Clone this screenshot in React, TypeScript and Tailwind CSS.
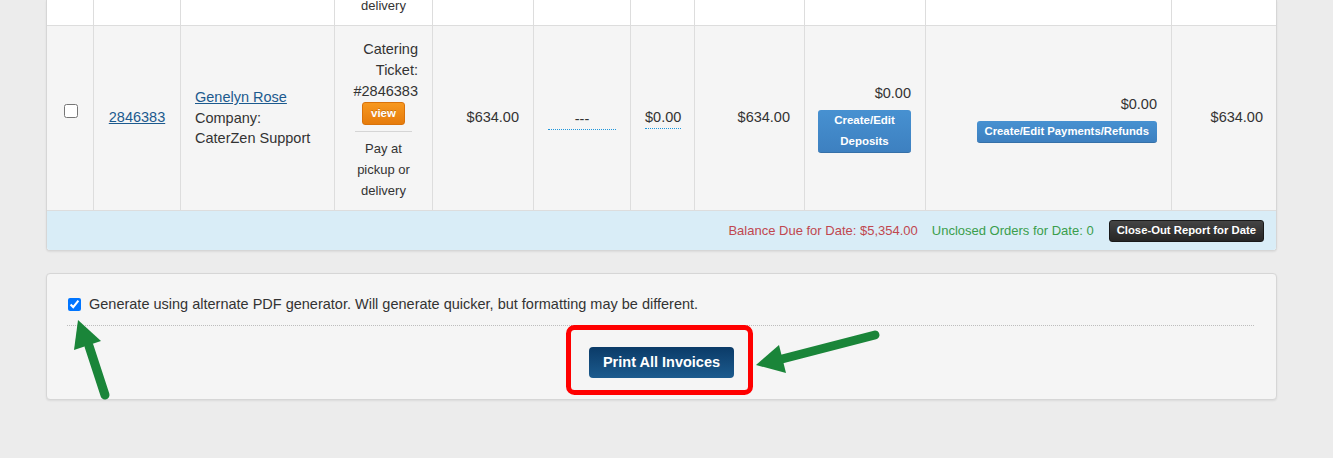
import React from "react";

const cols = "grid grid-cols-[47px_87px_154px_98px_101px_97px_64px_110px_121px_246px_104px]";

function Cell({ className = "", children }: { className?: string; children?: React.ReactNode }) {
  return <div className={`border-r border-b border-[#dddddd] ${className}`}>{children}</div>;
}

export default function App() {
  return (
    <div className="relative h-[458px] w-[1333px] overflow-hidden bg-[#ececec] font-['Liberation_Sans',Arial,sans-serif] text-[14.5px] text-[#333333]">
      {/* orders table panel */}
      <div className="ml-[46px] w-[1231px] rounded-b-[4px] border-x border-b border-[#d6d6d6] bg-white shadow-[0_1px_2px_rgba(0,0,0,0.08)]">
        {/* previous row (cut off) */}
        <div className={`${cols} bg-white`}>
          <Cell className="h-[26px]" />
          <Cell className="h-[26px]" />
          <Cell className="h-[26px]" />
          <Cell className="h-[26px] text-center text-[13px] leading-[12px]">delivery</Cell>
          <Cell className="h-[26px]" />
          <Cell className="h-[26px]" />
          <Cell className="h-[26px]" />
          <Cell className="h-[26px]" />
          <Cell className="h-[26px]" />
          <Cell className="h-[26px]" />
          <Cell className="h-[26px] border-r-0" />
        </div>

        {/* order row */}
        <div className={`${cols} bg-[#f5f5f5]`}>
          <Cell className="flex h-[185px] items-center justify-center">
            <input type="checkbox" className="mb-[15px] ml-[1px] h-[14px] w-[14px]" />
          </Cell>
          <Cell className="flex h-[185px] items-center justify-center">
            <a className="text-[#1c5a8e] underline">2846383</a>
          </Cell>
          <Cell className="flex h-[185px] flex-col justify-center px-[14px] leading-[20.5px]">
            <a className="self-start text-[#1c5a8e] underline">Genelyn Rose</a>
            <div>Company:</div>
            <div>CaterZen Support</div>
          </Cell>
          <Cell className="flex h-[185px] flex-col justify-center px-[14px] pt-[3px]">
            <div className="text-right leading-[21px]">
              Catering
              <br />
              Ticket:
              <br />
              #2846383
            </div>
            <div className="flex justify-center">
              <span className="h-[23px] rounded-[3px] border border-[#d9720a] bg-linear-to-b from-[#f7981f] to-[#e67c0b] px-[8px] text-[11.5px] font-bold leading-[21px] text-white [text-shadow:0_-1px_0_rgba(0,0,0,0.2)]">
                view
              </span>
            </div>
            <div className="mx-[6px] mt-[6px] border-t border-[#d5d5d5]" />
            <div className="pt-[6px] text-center text-[13px] leading-[21px]">
              Pay at
              <br />
              pickup or
              <br />
              delivery
            </div>
          </Cell>
          <Cell className="flex h-[185px] items-center justify-end px-[14px]">$634.00</Cell>
          <Cell className="flex h-[185px] items-center px-[14px]">
            <div className="mt-[3px] w-full border-b border-dotted border-[#1e96dc] text-center leading-[19px]">---</div>
          </Cell>
          <Cell className="flex h-[185px] items-center px-[14px]">
            <span className="border-b border-dotted border-[#1e96dc]">$0.00</span>
          </Cell>
          <Cell className="flex h-[185px] items-center justify-end px-[14px]">$634.00</Cell>
          <Cell className="flex h-[185px] flex-col items-end justify-center px-[14px]">
            <div className="leading-[20px]">$0.00</div>
            <button className="mt-[7px] w-[93px] rounded-[3px] border-b border-[#3570a8] bg-linear-to-b from-[#4791d1] to-[#3d80c0] text-[11.5px] font-bold leading-[21px] text-white">
              Create/Edit
              <br />
              Deposits
            </button>
          </Cell>
          <Cell className="flex h-[185px] flex-col items-end justify-center px-[14px]">
            <div className="leading-[20px]">$0.00</div>
            <button className="mt-[7px] h-[22px] rounded-[3px] border-b border-[#3570a8] bg-linear-to-b from-[#4791d1] to-[#3d80c0] px-[8px] text-[11.3px] font-bold leading-[21px] text-white">
              Create/Edit Payments/Refunds
            </button>
          </Cell>
          <Cell className="flex h-[185px] items-center justify-end border-r-0 px-[13px]">$634.00</Cell>
        </div>

        {/* date summary */}
        <div className="flex h-[39px] items-center justify-end rounded-b-[3px] bg-[#d9edf7] pr-[12px] text-[13px]">
          <span className="mr-[14px] text-[#c0474f]">Balance Due for Date: $5,354.00</span>
          <span className="mr-[15px] text-[#3a9e4c]">Unclosed Orders for Date: 0</span>
          <button className="h-[22px] rounded-[3px] border border-[#1a1a1a] bg-linear-to-b from-[#444444] to-[#262626] px-[7px] text-[11.3px] font-bold text-white">
            Close-Out Report for Date
          </button>
        </div>
      </div>

      {/* print panel */}
      <div className="ml-[46px] mt-[22px] w-[1231px] rounded-[4px] border border-[#d6d6d6] bg-[#f5f5f5] pb-[21px] pl-[20px] pr-[22px] pt-[20px] shadow-[0_1px_2px_rgba(0,0,0,0.08)]">
        <label className="flex items-center pb-[11px] leading-[20px]">
          <input type="checkbox" defaultChecked className="ml-[1px] mr-[8px] h-[13px] w-[13px]" />
          Generate using alternate PDF generator. Will generate quicker, but formatting may be different.
        </label>
        <div className="border-t border-dotted border-[#bdbdbd]" />
        <div className="mt-[21px] flex justify-center pl-[2px]">
          <button className="h-[31px] rounded-[4px] bg-linear-to-b from-[#0b3b68] to-[#1c5b8e] px-[14px] text-[14.5px] font-bold text-white">
            Print All Invoices
          </button>
        </div>
      </div>

      {/* annotations */}
      <svg className="pointer-events-none absolute left-0 top-0" width="1333" height="458" viewBox="0 0 1333 458">
        <rect x="568.5" y="327.5" width="182" height="65" rx="6" fill="none" stroke="#ff0000" strokeWidth="5" />
        <line x1="105" y1="395" x2="89" y2="346" stroke="#1a8539" strokeWidth="9" strokeLinecap="round" />
        <polygon points="78,320 74,350 101,341" fill="#1a8539" />
        <line x1="875" y1="335" x2="782" y2="359" stroke="#1a8539" strokeWidth="9" strokeLinecap="round" />
        <polygon points="756,365 779,345 786,373" fill="#1a8539" />
      </svg>
    </div>
  );
}
